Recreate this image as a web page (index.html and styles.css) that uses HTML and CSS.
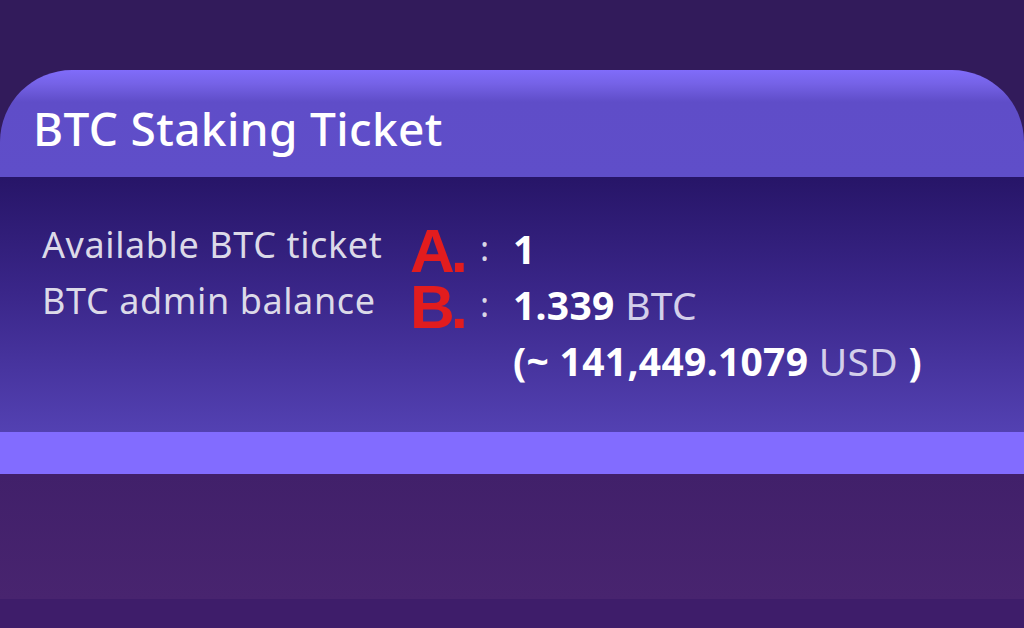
FILE: index.html
```html
<!DOCTYPE html>
<html>
<head>
<meta charset="utf-8">
<link rel="stylesheet" href="styles.css">
</head>
<body>
<div class="page">
  <div class="top-space"></div>
  <section class="card">
    <header class="card-head">
      <h1 class="card-title">BTC Staking Ticket</h1>
    </header>
    <div class="card-body">
      <div class="info-grid">
        <div class="label">Available BTC ticket</div>
        <div class="marker">A.</div>
        <div class="colon">:</div>
        <div class="value"><b>1</b></div>

        <div class="label">BTC admin balance</div>
        <div class="marker">B.</div>
        <div class="colon">:</div>
        <div class="value"><b>1.339</b> <span class="unit">BTC</span></div>

        <div class="label"></div>
        <div class="marker"></div>
        <div class="colon"></div>
        <div class="value"><b>(~ 141,449.1079</b> <span class="unit">USD</span> <b>)</b></div>
      </div>
    </div>
    <div class="card-stripe"></div>
  </section>
  <div class="lower-band"></div>
  <div class="bottom-band"></div>
</div>
</body>
</html>
```

FILE: styles.css
```css
* { box-sizing: border-box; }
html, body {
  margin: 0;
  padding: 0;
  width: 1024px;
  height: 628px;
  overflow: hidden;
  background: #321b5b;
  font-family: "Noto Sans", "Open Sans", sans-serif;
}
.page {
  display: flex;
  flex-direction: column;
  height: 628px;
}
.top-space {
  height: 70px;
  flex: none;
}
.card {
  display: flex;
  flex-direction: column;
  flex: none;
}
.card-head {
  height: 107px;
  border-radius: 72px 72px 0 0;
  background: linear-gradient(to bottom, #806cfa 0px, #7562e6 14px, #5f4dc8 32px, #5f4ec9 100%);
  display: flex;
  align-items: center;
  padding: 0 0 0 33px;
}
.card-title {
  margin: 0;
  font-size: 46px;
  font-weight: 500;
  color: #ffffff;
  line-height: 1;
  padding-top: 9px;
  letter-spacing: 0.35px;
}
.card-body {
  height: 255px;
  background: linear-gradient(to bottom, #271568 0%, #3a2689 45%, #5341b2 100%);
  padding: 40px 0 0 42px;
}
.info-grid {
  display: grid;
  grid-template-columns: 368px 70px 33px auto;
  grid-auto-rows: 56px;
  align-items: center;
  font-size: 36px;
  line-height: 56px;
}
.label {
  color: #dcdae8;
  white-space: nowrap;
  letter-spacing: 0.6px;
}
.marker {
  font-family: "Liberation Sans", Arial, sans-serif;
  font-weight: 700;
  color: #e21c1e;
  font-size: 62px;
  letter-spacing: -4px;
  line-height: 46px;
  margin-top: 12px;
}
.colon {
  color: #d8d6e6;
  font-size: 34px;
  margin-top: 6px;
}
.value {
  color: #ffffff;
  white-space: nowrap;
  font-size: 39px;
  letter-spacing: 0.3px;
  margin-top: 8px;
}
.value b {
  font-weight: 700;
}
.unit {
  color: #d3cfea;
  font-weight: 400;
}
.card-stripe {
  height: 42px;
  background: #826cff;
}
.lower-band {
  height: 125px;
  flex: none;
  background: linear-gradient(to bottom, #41206a, #48246f);
}
.bottom-band {
  flex: 1;
  background: #3e1d6a;
}
```
